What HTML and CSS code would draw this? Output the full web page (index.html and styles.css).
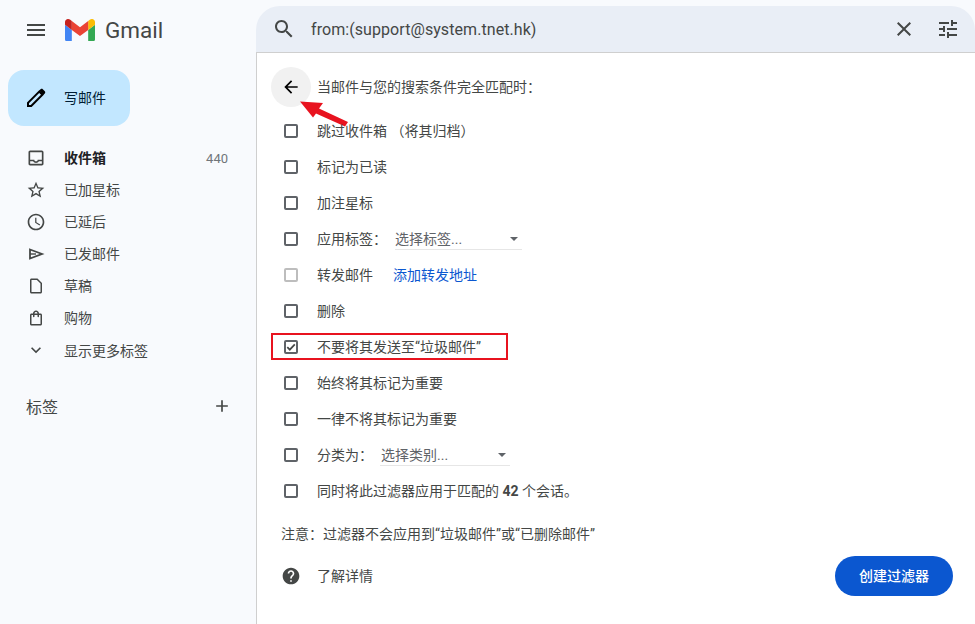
FILE: index.html
```html
<!doctype html>
<html>
<head>
  <meta charset="utf-8">
  <link rel="stylesheet" href="styles.css">
</head>
<body>
  <div class="app">
    <div class="sidebar">
      <div class="brand">
        <svg class="menuIcon" viewBox="0 0 24 24"><path d="M3 18h18v-2H3v2zm0-5h18v-2H3v2zm0-7v2h18V6H3z"/></svg>
        <svg class="logo" viewBox="52 42 88 66">
          <path fill="#4285f4" d="M58 108h14V74L52 59v43c0 3.32 2.69 6 6 6"/>
          <path fill="#34a853" d="M120 108h14c3.32 0 6-2.69 6-6V59l-20 15"/>
          <path fill="#fbbc04" d="M120 48v26l20-15v-8c0-7.42-8.47-11.65-14.4-7.2"/>
          <path fill="#ea4335" d="M72 74V48l24 18 24-18v26L96 92"/>
          <path fill="#c5221f" d="M52 51v8l20 15V48l-5.6-4.2c-5.94-4.45-14.4-.22-14.4 7.2"/>
        </svg>
        <span class="brandName">Gmail</span>
      </div>

      <button class="compose">
        <svg class="composeIcon" viewBox="0 0 24 24">
          <path d="M4 20v-3.2L15.2 5.6l3.2 3.2L7.2 20z" fill="none" stroke="#000" stroke-width="2"/>
          <path d="M15 4.6l1.6-1.4c.7-.6 1.6-.6 2.2 0l2 2c.6.6.6 1.5 0 2.2l-1.5 1.5z" fill="#000"/>
        </svg>
        <span class="composeText">写邮件</span>
      </button>

      <div class="nav">
        <div class="navItem strong">
          <svg class="navIcon" viewBox="0 0 24 24"><path d="M19 3H5c-1.1 0-2 .9-2 2v14c0 1.1.9 2 2 2h14c1.1 0 2-.9 2-2V5c0-1.1-.9-2-2-2zm0 16H5v-3h3.56c.69 1.19 1.97 2 3.45 2s2.75-.81 3.45-2H19v3zm0-5h-4.99c0 1.1-.9 2-2 2s-2-.9-2-2H5V5h14v9z"/></svg>
          <span class="navText">收件箱</span>
          <span class="count">440</span>
        </div>
        <div class="navItem">
          <svg class="navIcon" viewBox="0 0 24 24"><path d="M22 9.24l-7.19-.62L12 2 9.19 8.63 2 9.24l5.46 4.73L5.82 21 12 17.27 18.18 21l-1.63-7.03L22 9.24zM12 15.4l-3.76 2.27 1-4.28-3.32-2.88 4.38-.38L12 6.1l1.71 4.04 4.38.38-3.32 2.88 1 4.28L12 15.4z"/></svg>
          <span class="navText">已加星标</span>
        </div>
        <div class="navItem">
          <svg class="navIcon" viewBox="0 0 24 24"><path d="M11.99 2C6.47 2 2 6.48 2 12s4.47 10 9.99 10C17.52 22 22 17.52 22 12S17.52 2 11.99 2zM12 20c-4.42 0-8-3.58-8-8s3.58-8 8-8 8 3.58 8 8-3.58 8-8 8zm.5-13H11v6l5.25 3.15.75-1.23-4.5-2.67z"/></svg>
          <span class="navText">已延后</span>
        </div>
        <div class="navItem">
          <svg class="navIcon" viewBox="0 0 20 20">
            <path d="M4 5.5L16 10 4 14.5z" fill="none" stroke="#444746" stroke-width="1.8"/>
            <path d="M4 10h6" stroke="#444746" stroke-width="1.4"/>
          </svg>
          <span class="navText">已发邮件</span>
        </div>
        <div class="navItem">
          <svg class="navIcon small" viewBox="0 0 24 24"><path d="M14 2H6c-1.1 0-1.99.9-1.99 2L4 20c0 1.1.89 2 1.99 2H18c1.1 0 2-.9 2-2V8l-6-6zM6 20V4h7.17L18 8.83V20H6z"/></svg>
          <span class="navText">草稿</span>
        </div>
        <div class="navItem">
          <svg class="navIcon small" viewBox="0 0 24 24"><path d="M18 6h-2c0-2.21-1.79-4-4-4S8 3.79 8 6H6c-1.1 0-2 .9-2 2v12c0 1.1.9 2 2 2h12c1.1 0 2-.9 2-2V8c0-1.1-.9-2-2-2zm-6-2c1.1 0 2 .9 2 2h-4c0-1.1.9-2 2-2zm6 16H6V8h2v2c0 .55.45 1 1 1s1-.45 1-1V8h4v2c0 .55.45 1 1 1s1-.45 1-1V8h2v12z"/></svg>
          <span class="navText">购物</span>
        </div>
        <div class="navItem">
          <svg class="navIcon" viewBox="0 0 24 24"><path d="M16.59 8.59L12 13.17 7.41 8.59 6 10l6 6 6-6z"/></svg>
          <span class="navText">显示更多标签</span>
        </div>
      </div>

      <div class="labelsHead">
        <span>标签</span>
        <svg class="navIcon" viewBox="0 0 24 24"><path d="M19 13h-6v6h-2v-6H5v-2h6V5h2v6h6v2z"/></svg>
      </div>
    </div>

    <div class="main">
      <div class="searchBar">
        <svg class="searchIcon" viewBox="0 0 24 24"><path d="M15.5 14h-.79l-.28-.27C15.41 12.59 16 11.11 16 9.5 16 5.91 13.09 3 9.5 3S3 5.91 3 9.5 5.91 16 9.5 16c1.61 0 3.09-.59 4.23-1.57l.27.28v.79l5 4.99L20.49 19l-4.99-5zm-6 0C7.01 14 5 11.99 5 9.5S7.01 5 9.5 5 14 7.01 14 9.5 11.99 14 9.5 14z"/></svg>
        <span class="query">from:(support@system.tnet.hk)</span>
        <svg class="searchIcon" viewBox="0 0 24 24"><path d="M19 6.41L17.59 5 12 10.59 6.41 5 5 6.41 10.59 12 5 17.59 6.41 19 12 13.41 17.59 19 19 17.59 13.41 12z"/></svg>
        <svg class="searchIcon tune" viewBox="0 0 24 24"><path d="M3 17v2h6v-2H3zM3 5v2h10V5H3zm10 16v-2h8v-2h-8v-2h-2v6h2zM7 9v2H3v2h4v2h2V9H7zm14 4v-2H11v2h10zm-6-4h2V7h4V5h-4V3h-2v6z"/></svg>
      </div>

      <div class="panel">
        <div class="panelHead">
          <div class="backBtn">
            <svg class="backIcon" viewBox="0 0 24 24"><path d="M20 11H7.83l5.59-5.59L12 4l-8 8 8 8 1.41-1.41L7.83 13H20v-2z"/></svg>
          </div>
          <span class="lbl">当邮件与您的搜索条件完全匹配时：</span>
          <svg class="redArrow" viewBox="300 100 50 30">
            <path fill="#e8131f" d="M300 101.5L323 103l-4 5.5L348 122l-3 4.5-29-13-3 4z"/>
          </svg>
        </div>

        <div class="row"><span class="box"></span><span class="lbl">跳过收件箱 （将其归档）</span></div>
        <div class="row"><span class="box"></span><span class="lbl">标记为已读</span></div>
        <div class="row"><span class="box"></span><span class="lbl">加注星标</span></div>
        <div class="row">
          <span class="box"></span><span class="lbl">应用标签：</span>
          <div class="select labelSelect"><span class="lbl">选择标签...</span><i class="caret"></i></div>
        </div>
        <div class="row"><span class="box off"></span><span class="lbl">转发邮件</span><a class="link lbl">添加转发地址</a></div>
        <div class="row"><span class="box"></span><span class="lbl">删除</span></div>
        <div class="row">
          <span class="box">
            <svg class="tick" viewBox="0 0 10 10"><path d="M1.3 5.2l2.5 2.5 5-5.4" fill="none" stroke="#444746" stroke-width="1.7"/></svg>
          </span>
          <span class="lbl">不要将其发送至“垃圾邮件”</span>
          <div class="redBox"></div>
        </div>
        <div class="row"><span class="box"></span><span class="lbl">始终将其标记为重要</span></div>
        <div class="row"><span class="box"></span><span class="lbl">一律不将其标记为重要</span></div>
        <div class="row">
          <span class="box"></span><span class="lbl">分类为：</span>
          <div class="select catSelect"><span class="lbl">选择类别...</span><i class="caret"></i></div>
        </div>
        <div class="row"><span class="box"></span><span class="lbl">同时将此过滤器应用于匹配的 <b>42</b> 个会话。</span></div>

        <div class="note">注意：过滤器不会应用到“垃圾邮件”或“已删除邮件”</div>

        <div class="foot">
          <div class="learn">
            <svg class="helpIcon" viewBox="0 0 24 24"><path d="M12 2C6.48 2 2 6.48 2 12s4.48 10 10 10 10-4.48 10-10S17.52 2 12 2zm1 17h-2v-2h2v2zm2.07-7.75l-.9.92C13.45 12.9 13 13.5 13 15h-2v-.5c0-1.1.45-2.1 1.17-2.83l1.24-1.26c.37-.36.59-.86.59-1.41 0-1.1-.9-2-2-2s-2 .9-2 2H8c0-2.21 1.79-4 4-4s4 1.79 4 4c0 .88-.36 1.68-.93 2.25z"/></svg>
            <span class="lbl">了解详情</span>
          </div>
          <button class="createBtn">创建过滤器</button>
        </div>
      </div>
    </div>
  </div>
</body>
</html>
```

FILE: styles.css
```css
html, body {
  margin: 0;
  height: 100%;
  overflow: hidden;
}
body {
  background-color: #f8fafd;
  color: #444746;
  font-family: Roboto, "Noto Sans CJK SC", sans-serif;
  font-size: 14px;
}
.app {
  display: flex;
  height: 624px;
}
.lbl {
  margin-bottom: 2px;
}

/* left column */
.sidebar {
  width: 256px;
  flex: none;
}
.brand {
  display: flex;
  align-items: center;
  height: 60px;
  padding-left: 24px;
}
.menuIcon {
  width: 24px;
  height: 24px;
  fill: #444746;
}
.logo {
  width: 30px;
  height: 22.5px;
  margin-left: 17px;
}
.brandName {
  margin-left: 10px;
  font-size: 22.5px;
  color: #444746;
}
.compose {
  display: flex;
  align-items: center;
  width: 122px;
  height: 56px;
  margin: 10px 0 0 8px;
  padding: 0 0 0 16px;
  border: none;
  border-radius: 16px;
  background-color: #c2e7ff;
  color: #001d35;
  font: inherit;
}
.composeIcon {
  width: 24px;
  height: 24px;
  margin-right: 16px;
}
.composeText {
  margin-bottom: 2px;
}
.nav {
  margin-top: 16px;
  padding-right: 28px;
}
.navItem {
  display: flex;
  align-items: center;
  height: 32px;
  padding-left: 26px;
}
.navIcon {
  width: 20px;
  height: 20px;
  flex: none;
  fill: #444746;
}
.navIcon.small {
  width: 18px;
  height: 18px;
  margin: 0 1px;
}
.navText {
  margin-left: 18px;
  margin-bottom: 2px;
  flex: 1;
}
.navItem:last-child .navText {
  margin-bottom: 0;
}
.strong {
  color: #202124;
  font-weight: 700;
}
.count {
  font-size: 13px;
  font-weight: 400;
  color: #70757a;
}
.labelsHead {
  display: flex;
  align-items: center;
  justify-content: space-between;
  height: 32px;
  margin-top: 24px;
  padding: 0 24px 0 26px;
  font-size: 16px;
}

/* search */
.main {
  flex: 1;
  min-width: 0;
  padding-top: 6px;
}
.searchBar {
  display: flex;
  align-items: center;
  height: 46px;
  padding: 0 15px 0 16px;
  background-color: #e9eef6;
  border-radius: 24px 24px 0 0;
}
.searchIcon {
  width: 24px;
  height: 24px;
  flex: none;
  fill: #444746;
}
.tune {
  margin-left: 20px;
}
.query {
  flex: 1;
  margin-left: 15px;
  font-size: 16px;
  letter-spacing: 0.07px;
  color: #444746;
}

/* filter panel */
.panel {
  background-color: #fff;
  border-top: 1px solid #cfcfcf;
  border-left: 1px solid #cfcfcf;
  height: 571px;
  padding-top: 14px;
  color: #444746;
}
.panelHead {
  position: relative;
  display: flex;
  align-items: center;
  gap: 6px;
  height: 40px;
  margin: 0 0 6px 14px;
}
.backBtn {
  display: flex;
  align-items: center;
  justify-content: center;
  width: 40px;
  height: 40px;
  border-radius: 50%;
  background-color: #f1f1f1;
}
.backIcon {
  width: 20px;
  height: 20px;
  fill: #000;
}
.redArrow {
  position: absolute;
  left: 29px;
  top: 33px;
  width: 50px;
  height: 30px;
}
.row {
  position: relative;
  display: flex;
  align-items: center;
  height: 36px;
  padding-left: 27px;
}
.box {
  display: flex;
  width: 10px;
  height: 10px;
  margin-right: 19px;
  border: 2px solid #5f6368;
  border-radius: 2px;
  flex: none;
}
.box.off {
  border-color: #bdbdbd;
}
.tick {
  width: 10px;
  height: 10px;
}
.link {
  margin-left: 20px;
  color: #0b57d0;
}
.redBox {
  position: absolute;
  left: 14px;
  top: 4px;
  width: 233px;
  height: 23px;
  border: 2px solid #e8131f;
}
.select {
  display: flex;
  align-items: center;
  justify-content: space-between;
  box-sizing: border-box;
  height: 22px;
  padding: 0 2px 0 0;
  border-bottom: 1px solid #e6e6e6;
  color: #5f6368;
}
.labelSelect {
  width: 127px;
  margin-left: 8px;
}
.catSelect {
  width: 130px;
  margin-left: 7px;
  padding-left: 1px;
}
.caret {
  width: 0;
  height: 0;
  margin-right: 2px;
  border-left: 4px solid transparent;
  border-right: 4px solid transparent;
  border-top: 4px solid #5f6368;
}
.note {
  height: 20px;
  line-height: 20px;
  margin: 15px 0 12px 24px;
}
.foot {
  display: flex;
  align-items: center;
  justify-content: space-between;
  height: 40px;
  padding: 0 22px 0 24px;
}
.learn {
  display: flex;
  align-items: center;
  gap: 16px;
}
.helpIcon {
  width: 20px;
  height: 20px;
  fill: #444746;
}
.createBtn {
  width: 118px;
  height: 40px;
  padding: 0 0 2px;
  border: none;
  border-radius: 20px;
  background-color: #0b57d0;
  color: #fff;
  font: inherit;
  font-weight: 500;
}
```
